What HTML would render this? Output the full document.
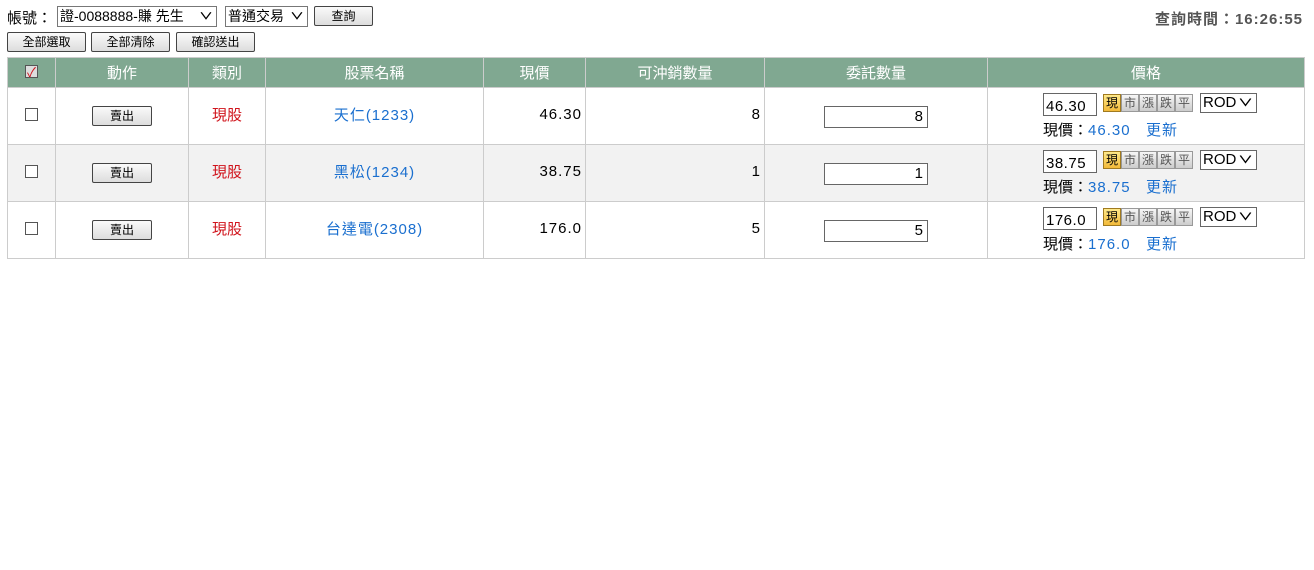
<!DOCTYPE html>
<html><head><meta charset="utf-8"><style>
*{box-sizing:border-box}
body{margin:0;width:1314px;height:570px;background:#fff;font-family:"Liberation Sans","Noto Sans CJK TC",sans-serif;font-size:14px;color:#000;position:relative}
.abs{position:absolute}
.sel{position:absolute;height:21px;border:1px solid #777;background:#fff;font-size:14px;line-height:19px;padding-left:2px;white-space:nowrap}
.sel .ar{position:absolute;right:3px;top:0;font-weight:bold;transform:scaleY(.7)}
.btn{position:absolute;height:20px;border:1px solid #444;border-radius:2px;background:linear-gradient(#fafafa,#ddd);font-size:12px;line-height:18px;text-align:center}
table{position:absolute;left:7px;top:57px;border-collapse:collapse;width:1298px}
td,th{border:1px solid #ccc;padding:0}
th{background:#80a891;color:#fff;font-weight:normal;font-size:15px;height:30px}
td{height:57px;position:relative;padding-bottom:4px}
tr.g td{background:#f2f2f2}
.cb{display:inline-block;width:13px;height:13px;border:1px solid #555;background:#fff;position:relative;top:2px}
.red{color:#d0131b;font-size:15px;text-align:center}
.blue{color:#1a6fcf;letter-spacing:1px}
.num{text-align:right;padding-right:3px;font-size:15px;letter-spacing:1px}
.qty{position:absolute;left:59px;top:18px;width:104px;height:22px;border:1px solid #666;background:#fff;text-align:right;padding-right:4px;font-size:15px;line-height:20px}
.pr{position:absolute;left:55px;top:5px;width:54px;height:23px;border:1px solid #666;background:#fff;font-size:15px;line-height:25px;padding-left:2px;letter-spacing:.5px}
.pb{position:absolute;top:6px;width:18px;height:18px;border:1px solid #999;background:linear-gradient(#f6f6f6,#ccc);font-size:12px;line-height:16px;text-align:center;color:#555}
.pb.y{background:linear-gradient(#ffe98a,#f2b93a);color:#000;border-color:#a07a20}
.rod{position:absolute;left:212px;top:5px;width:57px;height:20px;border:1px solid #666;background:#fff;font-size:15px;line-height:18px;padding-left:2px}
.rod b{position:absolute;right:3px;top:0;transform:scaleY(.7)}
.cur{position:absolute;left:55px;top:31px;font-size:15px;white-space:nowrap}
</style></head><body>
<div class="abs" style="left:7px;top:7px;font-size:15px">帳號：</div>
<div class="sel" style="left:57px;top:6px;width:160px">證-0088888-賺 先生<span class="ar">∨</span></div>
<div class="sel" style="left:225px;top:6px;width:83px">普通交易<span class="ar">∨</span></div>
<div class="btn" style="left:314px;top:6px;width:59px">查詢</div>
<div class="abs" style="right:11px;top:8px;font-size:15px;font-weight:bold;color:#555;letter-spacing:1px">查詢時間：16:26:55</div>
<div class="btn" style="left:7px;top:32px;width:79px">全部選取</div>
<div class="btn" style="left:91px;top:32px;width:79px">全部清除</div>
<div class="btn" style="left:176px;top:32px;width:79px">確認送出</div>
<table>
<tr><th style="width:48px"><span class="cb" style="background:#ddd;top:1px"><span style="color:#d0131b;font-size:13px;position:absolute;left:1px;top:-4px">✓</span></span></th><th style="width:133px">動作</th><th style="width:77px">類別</th><th style="width:218px">股票名稱</th><th style="width:102px">現價</th><th style="width:179px">可沖銷數量</th><th style="width:223px">委託數量</th><th>價格</th></tr>
<tr><td style="text-align:center"><span class="cb"></span></td><td><div class="btn" style="left:36px;top:18px;width:60px">賣出</div></td><td class="red">現股</td><td class="blue" style="text-align:center;font-size:15px">天仁(1233)</td><td class="num">46.30</td><td class="num">8</td><td><div class="qty">8</div></td><td><div class="pr">46.30</div><div class="pb y" style="left:115px">現</div><div class="pb" style="left:133px">市</div><div class="pb" style="left:151px">漲</div><div class="pb" style="left:169px">跌</div><div class="pb" style="left:187px">平</div><div class="rod">ROD<b>∨</b></div><div class="cur">現價：<span class="blue">46.30 &nbsp; 更新</span></div></td></tr>
<tr class="g"><td style="text-align:center"><span class="cb"></span></td><td><div class="btn" style="left:36px;top:18px;width:60px">賣出</div></td><td class="red">現股</td><td class="blue" style="text-align:center;font-size:15px">黑松(1234)</td><td class="num">38.75</td><td class="num">1</td><td><div class="qty">1</div></td><td><div class="pr">38.75</div><div class="pb y" style="left:115px">現</div><div class="pb" style="left:133px">市</div><div class="pb" style="left:151px">漲</div><div class="pb" style="left:169px">跌</div><div class="pb" style="left:187px">平</div><div class="rod">ROD<b>∨</b></div><div class="cur">現價：<span class="blue">38.75 &nbsp; 更新</span></div></td></tr>
<tr><td style="text-align:center"><span class="cb"></span></td><td><div class="btn" style="left:36px;top:18px;width:60px">賣出</div></td><td class="red">現股</td><td class="blue" style="text-align:center;font-size:15px">台達電(2308)</td><td class="num">176.0</td><td class="num">5</td><td><div class="qty">5</div></td><td><div class="pr">176.0</div><div class="pb y" style="left:115px">現</div><div class="pb" style="left:133px">市</div><div class="pb" style="left:151px">漲</div><div class="pb" style="left:169px">跌</div><div class="pb" style="left:187px">平</div><div class="rod">ROD<b>∨</b></div><div class="cur">現價：<span class="blue">176.0 &nbsp; 更新</span></div></td></tr>
</table>
</body></html>
